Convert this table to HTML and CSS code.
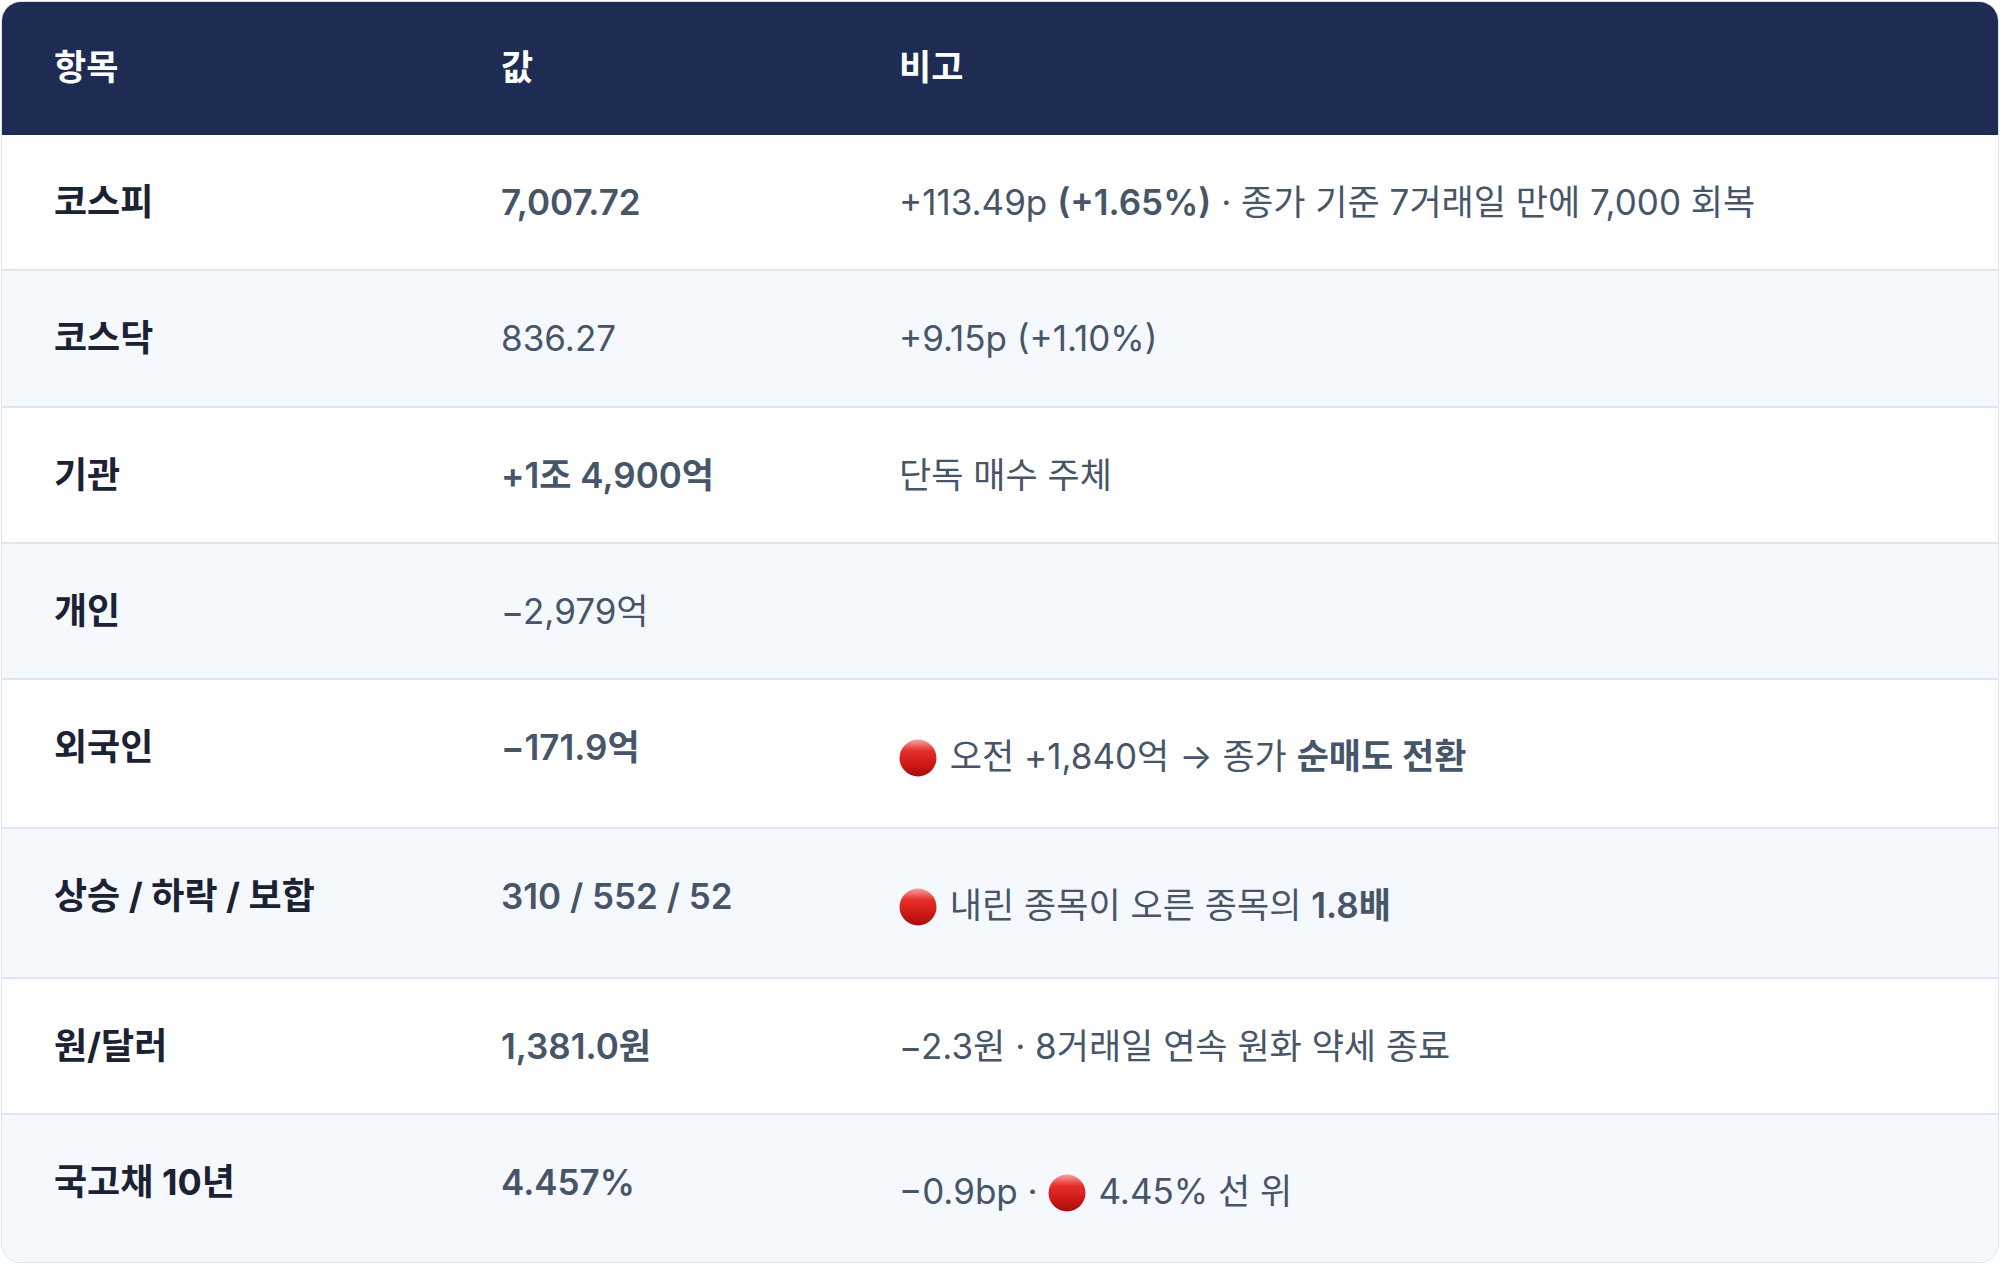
FILE: index.html
```html
<!DOCTYPE html>
<html lang="ko">
<head>
<meta charset="utf-8">
<title>시장 요약</title>
<link rel="stylesheet" href="styles.css">
</head>
<body>
<svg class="defs" aria-hidden="true">
  <defs>
    <linearGradient id="redball" x1="0" y1="0" x2="0" y2="1">
      <stop offset="0" stop-color="#f7a3a3"/>
      <stop offset="0.3" stop-color="#e5302c"/>
      <stop offset="0.65" stop-color="#d01a16"/>
      <stop offset="1" stop-color="#a10f0f"/>
    </linearGradient>
  </defs>
</svg>
<div class="card">
  <table class="market">
    <colgroup>
      <col class="c-item">
      <col class="c-value">
      <col class="c-note">
    </colgroup>
    <thead>
      <tr><th>항목</th><th>값</th><th>비고</th></tr>
    </thead>
    <tbody>
      <tr>
        <td class="name">코스피</td>
        <td class="val strong">7,007.72</td>
        <td class="note">+113.49p <b>(+1.65%)</b> · 종가 기준 7거래일 만에 7,000 회복</td>
      </tr>
      <tr>
        <td class="name">코스닥</td>
        <td class="val">836.27</td>
        <td class="note">+9.15p (+1.10%)</td>
      </tr>
      <tr>
        <td class="name">기관</td>
        <td class="val strong">+1조 4,900억</td>
        <td class="note">단독 매수 주체</td>
      </tr>
      <tr>
        <td class="name">개인</td>
        <td class="val">−2,979억</td>
        <td class="note"></td>
      </tr>
      <tr>
        <td class="name">외국인</td>
        <td class="val strong">−171.9억</td>
        <td class="note"><svg class="dot" viewBox="0 0 38 38"><circle cx="19" cy="19" r="18.5" fill="url(#redball)"/></svg> 오전 +1,840억 → 종가 <b>순매도 전환</b></td>
      </tr>
      <tr>
        <td class="name">상승 / 하락 / 보합</td>
        <td class="val strong">310 / 552 / 52</td>
        <td class="note"><svg class="dot" viewBox="0 0 38 38"><circle cx="19" cy="19" r="18.5" fill="url(#redball)"/></svg> 내린 종목이 오른 종목의 <b>1.8배</b></td>
      </tr>
      <tr>
        <td class="name">원/달러</td>
        <td class="val strong">1,381.0원</td>
        <td class="note">−2.3원 · 8거래일 연속 원화 약세 종료</td>
      </tr>
      <tr>
        <td class="name">국고채 10년</td>
        <td class="val strong">4.457%</td>
        <td class="note">−0.9bp · <svg class="dot" viewBox="0 0 38 38"><circle cx="19" cy="19" r="18.5" fill="url(#redball)"/></svg> 4.45% 선 위</td>
      </tr>
    </tbody>
  </table>
</div>
</body>
</html>
```

FILE: styles.css
```css
html, body {
  margin: 0;
  padding: 0;
  background: #ffffff;
}

body {
  padding: 1px;
  font-family: Inter, "Noto Sans CJK KR", sans-serif;
  font-size: 35px;
  color: #475569;
}

.defs {
  position: absolute;
  width: 0;
  height: 0;
  overflow: hidden;
}

.card {
  border: 1px solid #dce3f0;
  border-radius: 20px;
  overflow: hidden;
  background: #ffffff;
}

.market {
  width: 100%;
  border-collapse: collapse;
  table-layout: fixed;
}

.c-item { width: 447px; }
.c-value { width: 398px; }

.market th {
  background: #1e2c53;
  color: #ffffff;
  font-weight: 700;
  text-align: left;
  line-height: 50px;
  padding: 40px 52px 43px;
}

.market td {
  line-height: 50px;
  padding: 42px 52px 42.3px;
  vertical-align: top;
  border-top: 2px solid #dfe5f1;
  white-space: nowrap;
}

.market thead + tbody tr:first-child td {
  border-top: none;
}

.market tbody tr:nth-child(even) td {
  background: #f5f8fd;
}

.name {
  font-weight: 700;
  font-size: 36px;
  color: #1a2233;
}

.val {
  font-weight: 400;
}

.val.strong {
  font-weight: 600;
}

.note b {
  font-weight: 600;
}

.dot {
  display: inline-block;
  width: 38px;
  height: 38px;
  vertical-align: -16px;
  margin: 17px 3px 8px 0;
}
```
